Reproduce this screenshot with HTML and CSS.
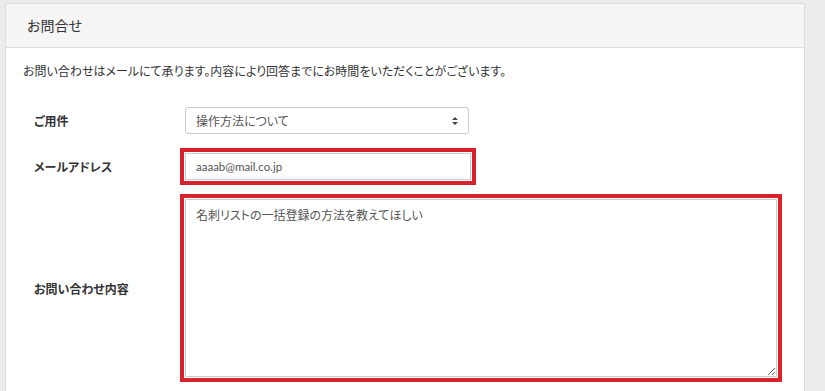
FILE: index.html
```html
<!DOCTYPE html>
<html lang="ja">
<head>
  <meta charset="UTF-8">
  <title>お問合せ</title>
  <link rel="stylesheet" href="styles.css">
</head>
<body>
  <div class="panel">
    <div class="panel-heading">お問合せ</div>
    <div class="panel-body">
      <p class="lead">お問い合わせはメールにて承ります。内容により回答までにお時間をいただくことがございます。</p>
      <form class="contact-form">
        <label class="form-label">ご用件</label>
        <div class="select-box">
          <span>操作方法について</span>
          <svg width="8" height="10" viewBox="0 0 8 10"><path d="M4 1 L7 4 L1 4 Z M4 9 L7 6 L1 6 Z" fill="#444"/></svg>
        </div>

        <label class="form-label">メールアドレス</label>
        <input class="text-input mark" type="text" value="aaaab@mail.co.jp">

        <label class="form-label">お問い合わせ内容</label>
        <textarea class="text-area mark">名刺リストの一括登録の方法を教えてほしい</textarea>
      </form>
    </div>
  </div>
</body>
</html>
```

FILE: styles.css
```css
body {
  margin: 0;
  background-color: #ececec;
  font-family: "Lato", "Noto Sans CJK JP", sans-serif;
  font-feature-settings: "palt";
  color: #333;
}
.panel {
  margin: 3px 0 0 5px;
  width: 798px;
  height: 400px;
  background: #fff;
  border: 1px solid #ddd;
}
.panel-heading {
  background: #f5f5f5;
  border-bottom: 1px solid #ddd;
  height: 43px;
  line-height: 43px;
  padding-left: 21px;
  font-size: 14px;
}
.panel-body {
  padding: 15px 0 0 17px;
}
.lead {
  margin: 0 0 26px;
  font-size: 12px;
  line-height: 18px;
}
.contact-form {
  display: grid;
  grid-template-columns: 151px auto;
  align-items: center;
  row-gap: 19px;
  padding-left: 11px;
}
.form-label {
  font-size: 12px;
  font-weight: bold;
}
.select-box {
  width: 284px;
  height: 27px;
  box-sizing: border-box;
  border: 1px solid #ccc;
  border-radius: 3px;
  padding: 0 9px 0 10px;
  display: flex;
  align-items: center;
  justify-content: space-between;
  font-size: 12px;
  color: #555;
}
.text-input,
.text-area {
  box-sizing: border-box;
  border: 1px solid #ccc;
  font-family: inherit;
  font-feature-settings: "palt";
  font-size: 12px;
  color: #555;
  padding: 0 10px;
  margin: 0;
}
.text-input {
  width: 286px;
  height: 27px;
  font-size: 11.5px;
}
.text-area {
  width: 592px;
  height: 178px;
  padding-top: 6px;
  display: block;
}
.mark {
  outline: 4px solid #d9222b;
  outline-offset: 1px;
}
```
